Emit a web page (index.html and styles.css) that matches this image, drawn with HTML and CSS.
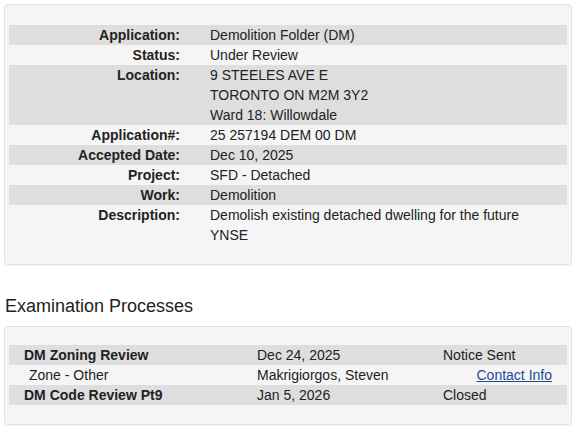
FILE: index.html
```html
<!DOCTYPE html>
<html lang="en">
<head>
<meta charset="utf-8">
<title>Application Details</title>
<link rel="stylesheet" href="styles.css">
</head>
<body>
<div class="panel panel-details">
  <table class="details">
    <tr class="alt"><th>Application:</th><td>Demolition Folder (DM)</td></tr>
    <tr><th>Status:</th><td>Under Review</td></tr>
    <tr class="alt"><th>Location:</th><td>9 STEELES AVE E<br>TORONTO ON M2M 3Y2<br>Ward 18: Willowdale</td></tr>
    <tr><th>Application#:</th><td>25 257194 DEM 00 DM</td></tr>
    <tr class="alt"><th>Accepted Date:</th><td>Dec 10, 2025</td></tr>
    <tr><th>Project:</th><td>SFD - Detached</td></tr>
    <tr class="alt"><th>Work:</th><td>Demolition</td></tr>
    <tr><th>Description:</th><td>Demolish existing detached dwelling for the future YNSE</td></tr>
  </table>
</div>
<h2 class="section-title">Examination Processes</h2>
<div class="panel panel-exam">
  <table class="exam">
    <colgroup><col class="c1"><col class="c2"><col class="c3"></colgroup>
    <tr class="alt"><td class="name">DM Zoning Review</td><td>Dec 24, 2025</td><td>Notice Sent</td></tr>
    <tr><td class="sub">Zone - Other</td><td>Makrigiorgos, Steven</td><td class="link-cell"><a href="#">Contact Info</a></td></tr>
    <tr class="alt"><td class="name">DM Code Review Pt9</td><td>Jan 5, 2026</td><td>Closed</td></tr>
  </table>
</div>
</body>
</html>
```
FILE: styles.css
```css
html, body {
  margin: 0;
  padding: 0;
  background: #fff;
}
body {
  padding: 4px;
  font-family: "Liberation Sans", Arial, sans-serif;
  font-size: 14px;
  line-height: 20px;
  color: #222;
}
.panel {
  width: 558px;
  background: #f5f5f5;
  border: 1px solid #e2e2e2;
  border-radius: 4px;
  box-shadow: 0 1px 1px rgba(0,0,0,0.05);
  padding: 20px 4px 19px 4px;
}
.panel-exam {
  padding-top: 18px;
}
table {
  width: 100%;
  border-collapse: collapse;
  border-spacing: 0;
}
td, th {
  padding: 0;
  vertical-align: top;
}
tr.alt {
  background: #dedede;
}
.details th {
  width: 171px;
  text-align: right;
  font-weight: bold;
}
.details td {
  padding-left: 30px;
  padding-right: 24px;
}
.section-title {
  font-size: 18px;
  font-weight: normal;
  line-height: 21px;
  margin: 31px 0 9px 0;
  padding-left: 1px;
  color: #222;
}
.exam {
  table-layout: fixed;
}
.exam col.c1 { width: 248px; }
.exam col.c2 { width: 186px; }
.exam col.c3 { width: 124px; }
.exam td.name {
  padding-left: 15px;
  font-weight: bold;
}
.exam td.sub {
  padding-left: 20px;
}
.exam td.link-cell {
  text-align: right;
  padding-right: 15px;
}
.exam a {
  color: #1f4b93;
  text-decoration: underline;
}
```
